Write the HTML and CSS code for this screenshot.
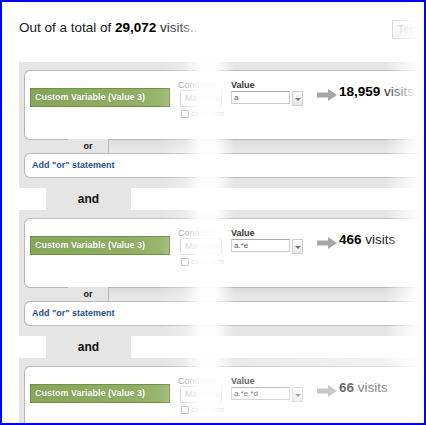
FILE: index.html
```html
<!DOCTYPE html>
<html>
<head>
<meta charset="utf-8">
<link rel="stylesheet" href="styles.css">
</head>
<body>
<div class="frame">
  <div class="header">
    <p class="total">Out of a total of <b>29,072</b> visits..</p>
    <button class="test">Test</button>
  </div>

  <div class="section">
    <div class="card">
      <div class="dim">Custom Variable (Value 3)</div>
      <div class="cond">
        <div class="lbl">Condition</div>
        <div class="select">Matches regex</div>
        <div class="case"><span class="cb"></span>case sensitive</div>
      </div>
      <div class="val">
        <div class="vlbl">Value</div>
        <div class="vrow"><span class="input">a</span><span class="dd"></span></div>
      </div>
      <svg class="arrow" width="20" height="12" viewBox="0 0 20 12"><path d="M0 3.5H11V0L20 6L11 12V8.5H0Z"/></svg>
      <div class="count"><b>18,959</b> visits</div>
    </div>
    <div class="or-row"><span class="or">or</span><span class="or-bar"></span></div>
    <div class="add">Add "or" statement</div>
  </div>

  <div class="and-row"><span class="and">and</span></div>

  <div class="section">
    <div class="card">
      <div class="dim">Custom Variable (Value 3)</div>
      <div class="cond">
        <div class="lbl">Condition</div>
        <div class="select">Matches regex</div>
        <div class="case"><span class="cb"></span>case sensitive</div>
      </div>
      <div class="val">
        <div class="vlbl">Value</div>
        <div class="vrow"><span class="input">a.*e</span><span class="dd"></span></div>
      </div>
      <svg class="arrow" width="20" height="12" viewBox="0 0 20 12"><path d="M0 3.5H11V0L20 6L11 12V8.5H0Z"/></svg>
      <div class="count"><b>466</b> visits</div>
    </div>
    <div class="or-row"><span class="or">or</span><span class="or-bar"></span></div>
    <div class="add">Add "or" statement</div>
  </div>

  <div class="and-row"><span class="and">and</span></div>

  <div class="section">
    <div class="card">
      <div class="dim">Custom Variable (Value 3)</div>
      <div class="cond">
        <div class="lbl">Condition</div>
        <div class="select">Matches regex</div>
        <div class="case"><span class="cb"></span>case sensitive</div>
      </div>
      <div class="val">
        <div class="vlbl">Value</div>
        <div class="vrow"><span class="input">a.*e.*d</span><span class="dd"></span></div>
      </div>
      <svg class="arrow" width="20" height="12" viewBox="0 0 20 12"><path d="M0 3.5H11V0L20 6L11 12V8.5H0Z"/></svg>
      <div class="count"><b>66</b> visits</div>
    </div>
  </div>

  <div class="fade-band"></div>
  <div class="fade-right"></div>
  <div class="fade-bottom"></div>
</div>
</body>
</html>
```

FILE: styles.css
```css
* { box-sizing: border-box; }
html, body { margin: 0; padding: 0; background: #fff; }
body { font-family: "Liberation Sans", Arial, Helvetica, sans-serif; }

.frame {
  position: relative;
  width: 426px;
  height: 425px;
  border: 2px solid #0000ff;
  padding: 17px 0 0 17px;
  overflow: hidden;
  background: #fff;
}

.header {
  display: flex;
  align-items: flex-start;
  height: 20px;
  margin-bottom: 23px;
}
.total {
  margin: 0;
  font-size: 13.5px;
  line-height: 17px;
  color: #1a1a1a;
}
.total b { color: #000; }
.test {
  margin: 1px 0 0 auto;
  width: 32px;
  height: 19px;
  padding: 0 0 0 5px;
  text-align: left;
  border: 1px solid #cfcfcf;
  background: linear-gradient(#fff, #ececec);
  color: #c8c8c8;
  font: bold 10px "Liberation Sans", Arial, sans-serif;
}

.section {
  background: #e5e5e5;
  padding: 8px 0 10px 5px;
}

.card {
  display: flex;
  align-items: flex-start;
  height: 70px;
  background: #fff;
  border: 1px solid #b9b9b9;
  border-right: none;
  border-radius: 6px 0 0 6px;
  padding: 9px 0 0 5px;
}

.dim {
  flex: none;
  width: 140px;
  height: 19px;
  margin-top: 8px;
  background: linear-gradient(to right, #86a759, #8fae63 70%, #9bb874);
  border: 1px solid #6f9246;
  color: #fff;
  font-size: 9px;
  font-weight: bold;
  line-height: 17px;
  padding-left: 4px;
  white-space: nowrap;
  text-shadow: 0 0 1px rgba(60, 90, 30, 0.4);
}

.cond {
  flex: none;
  width: 46px;
  margin-left: 8px;
  overflow: hidden;
  white-space: nowrap;
}
.lbl {
  font-size: 9px;
  line-height: 10px;
  color: #8a8a8a;
}
.select {
  width: 42px;
  height: 17px;
  margin: 0 0 0 2px;
  border: 1px solid #d2d2d2;
  border-radius: 2px;
  font-size: 9px;
  line-height: 15px;
  padding-left: 4px;
  color: #b0b0b0;
  overflow: hidden;
}
.case {
  display: flex;
  align-items: center;
  margin: 2px 0 0 3px;
  font-size: 8px;
  line-height: 9px;
  color: #aaa;
}
.cb {
  flex: none;
  width: 8px;
  height: 8px;
  border: 1px solid #aaa;
  border-radius: 1px;
  margin-right: 2px;
}

.val {
  flex: none;
  margin-left: 7px;
}
.vlbl {
  font-size: 9px;
  font-weight: bold;
  line-height: 10px;
  color: #333;
}
.vrow {
  display: flex;
  align-items: flex-start;
  margin-top: 1px;
}
.input {
  width: 59px;
  height: 13px;
  border: 1px solid #c9c9c9;
  border-top-color: #a9a9a9;
  font-size: 8px;
  line-height: 11px;
  padding-left: 2px;
  color: #555;
}
.dd {
  position: relative;
  width: 11px;
  height: 15px;
  margin-left: 2px;
  border: 1px solid #d0d0d0;
  background: linear-gradient(#fdfdfd, #e6e6e6);
}
.dd::after {
  content: "";
  position: absolute;
  left: 2px;
  top: 6px;
  border-left: 3px solid transparent;
  border-right: 3px solid transparent;
  border-top: 3px solid #777;
}

.arrow {
  flex: none;
  margin: 9px 0 0 14px;
  fill: #a7a7a7;
}
.count {
  margin: 4px 0 0 2px;
  font-size: 13.5px;
  line-height: 16px;
  color: #222;
  white-space: nowrap;
}
.count b { color: #000; }

.or-row {
  display: flex;
  height: 13px;
}
.or {
  flex: none;
  width: 40px;
  margin: -1px 0 0 44px;
  height: 14px;
  background: #e5e5e5;
  text-align: center;
  font-size: 9px;
  font-weight: bold;
  line-height: 14px;
  color: #111;
}
.or-bar {
  flex: 1;
  border-left: 1px solid #b9b9b9;
  background: linear-gradient(#dcdcdc, #ebebeb);
}

.add {
  height: 25px;
  background: #fff;
  border: 1px solid #b9b9b9;
  border-right: none;
  border-radius: 6px 0 0 6px;
  padding-left: 7px;
  font-size: 9px;
  font-weight: bold;
  line-height: 23px;
  color: #1f4f8f;
}

.and-row {
  height: 22px;
  padding-left: 27px;
}
.and {
  display: block;
  width: 85px;
  height: 22px;
  background: #e5e5e5;
  text-align: center;
  font-size: 12px;
  font-weight: bold;
  line-height: 22px;
  color: #111;
}

.fade-band {
  position: absolute;
  left: 158px;
  top: 0;
  bottom: 0;
  width: 74px;
  background: linear-gradient(to right,
    rgba(255,255,255,0) 0,
    rgba(255,255,255,0.3) 34%,
    rgba(255,255,255,0.95) 54%,
    rgba(255,255,255,0.95) 75%,
    rgba(255,255,255,0) 100%);
  pointer-events: none;
}
.fade-right {
  position: absolute;
  left: 383px;
  right: 0;
  top: 0;
  bottom: 0;
  background: linear-gradient(to right, rgba(255,255,255,0) 0, rgba(255,255,255,0.85) 70%, #fff 100%);
  pointer-events: none;
}
.fade-bottom {
  position: absolute;
  left: 222px;
  right: 0;
  top: 356px;
  bottom: 0;
  background: linear-gradient(to right, rgba(255,255,255,0.2), rgba(255,255,255,0.55));
  pointer-events: none;
}
```
